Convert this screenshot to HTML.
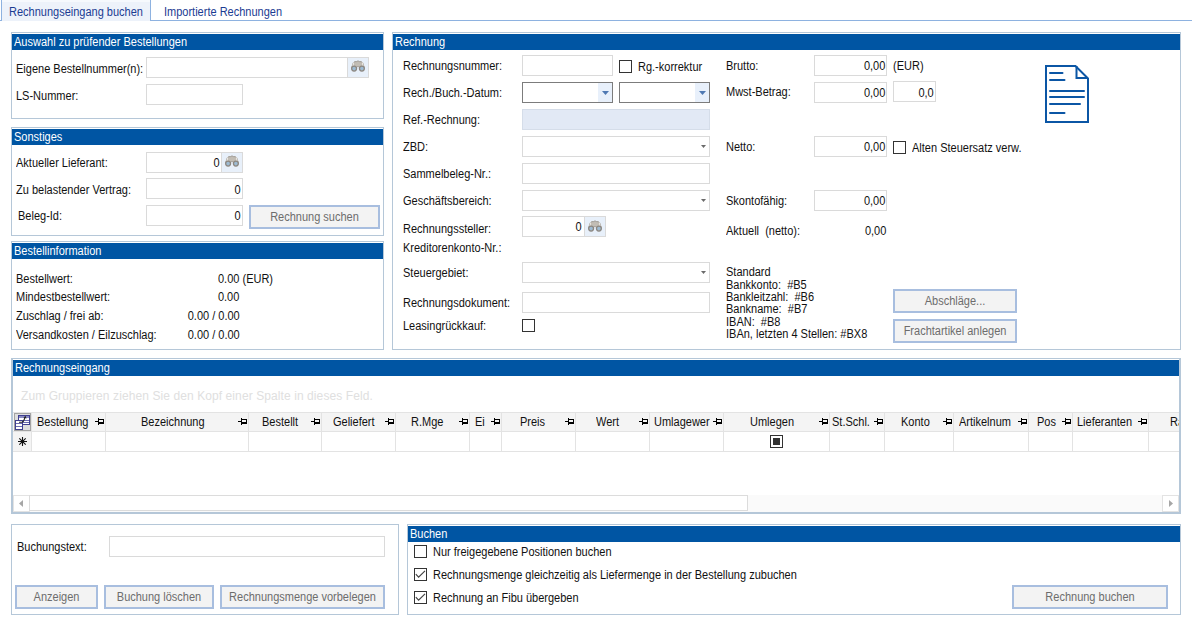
<!DOCTYPE html>
<html><head><meta charset="utf-8"><style>
html,body{margin:0;padding:0;width:1192px;height:623px;overflow:hidden;background:#fff;position:relative}
div,svg{position:absolute;box-sizing:content-box}
.ab{position:absolute}
.t{font-family:"Liberation Sans",sans-serif;font-size:12px;line-height:13px;white-space:nowrap;color:#111;transform:scaleX(0.9167);transform-origin:0 0}
.tr{transform-origin:100% 0}
.tc{transform-origin:50% 0}
.w{color:#fff}
.g{color:#6d6d6d}
.tb{color:#1b3c92}
.wm{color:#e0e0e0;font-size:12px;transform:none;letter-spacing:0.09px}
.gb{border:1px solid #b5c7d8;background:#fff}
.gh{background:#0055a3}
.in{border:1px solid #dadada;background:#fff}
.dd{border:1px solid #7c7c7c;background:#fff}
.btn{border:2px solid #a8bedf;background:#f3f3f3}
.cb{width:11px;height:11px;border:1px solid #333;background:#fff}
.bn{background:#e8f0fa;border-left:1px solid #dadada}
</style></head><body>

<div class="" style="left:0px;top:20px;width:1192px;height:1px;background:#8eb2e0"></div>
<div style="left:1px;top:-2px;width:148px;height:22px;border:1px solid #8eb2e0;border-bottom:none;border-radius:2px 2px 0 0;background:#edf2fa"></div>
<div class="" style="left:2px;top:0px;width:148px;height:2px;background:#f6f9fd"></div>
<div class="t tb" style="left:9px;top:6px;">Rechnungseingang buchen</div>
<div class="t tb" style="left:164px;top:6px;">Importierte Rechnungen</div>
<div class="gb" style="left:11px;top:32px;width:371px;height:85px"></div>
<div class="gh" style="left:12px;top:34px;width:371px;height:16px"></div>
<div class="t w" style="left:14px;top:36px;">Auswahl zu prüfender Bestellungen</div>
<div class="t " style="left:16px;top:63px;">Eigene Bestellnummer(n):</div>
<div class="t " style="left:16px;top:90px;">LS-Nummer:</div>
<div class="in" style="left:146px;top:57px;width:221px;height:19px;"></div>
<div class="bn" style="left:347px;top:58px;width:20px;height:19px"></div>
<svg class="ab" style="left:350px;top:60px" width="16" height="13" viewBox="0 0 16 13">
<path d="M3.2 2.8 Q4.6 1.2 6.4 1.6 L8 0.9 L9.6 1.6 Q11.4 1.2 12.8 2.8 L14.2 7.6 L9.3 7.6 L8 6.2 L6.7 7.6 L1.8 7.6 Z" fill="#c2bdb5" stroke="#9a948c" stroke-width="0.9"/>
<path d="M3.5 2.5 L3 6 M12.5 2.5 L13 6" stroke="#f2f0ec" stroke-width="1"/>
<circle cx="4.1" cy="8.6" r="2.45" fill="#9dbbd3" stroke="#8d8882" stroke-width="1.3"/>
<circle cx="11.9" cy="8.6" r="2.45" fill="#9dbbd3" stroke="#8d8882" stroke-width="1.3"/>
</svg>
<div class="in" style="left:146px;top:84px;width:95px;height:19px;"></div>
<div class="gb" style="left:11px;top:127px;width:371px;height:107px"></div>
<div class="gh" style="left:12px;top:129px;width:371px;height:16px"></div>
<div class="t w" style="left:14px;top:131px;">Sonstiges</div>
<div class="t " style="left:16px;top:157px;">Aktueller Lieferant:</div>
<div class="t " style="left:16px;top:184px;">Zu belastender Vertrag:</div>
<div class="t " style="left:18px;top:210px;">Beleg-Id:</div>
<div class="in" style="left:146px;top:152px;width:95px;height:19px;"></div>
<div class="bn" style="left:221px;top:153px;width:20px;height:19px"></div>
<svg class="ab" style="left:224px;top:155px" width="16" height="13" viewBox="0 0 16 13">
<path d="M3.2 2.8 Q4.6 1.2 6.4 1.6 L8 0.9 L9.6 1.6 Q11.4 1.2 12.8 2.8 L14.2 7.6 L9.3 7.6 L8 6.2 L6.7 7.6 L1.8 7.6 Z" fill="#c2bdb5" stroke="#9a948c" stroke-width="0.9"/>
<path d="M3.5 2.5 L3 6 M12.5 2.5 L13 6" stroke="#f2f0ec" stroke-width="1"/>
<circle cx="4.1" cy="8.6" r="2.45" fill="#9dbbd3" stroke="#8d8882" stroke-width="1.3"/>
<circle cx="11.9" cy="8.6" r="2.45" fill="#9dbbd3" stroke="#8d8882" stroke-width="1.3"/>
</svg>
<div class="t tr " style="right:972px;top:157px;">0</div>
<div class="in" style="left:146px;top:178px;width:95px;height:19px;"></div>
<div class="t tr " style="right:951px;top:184px;">0</div>
<div class="in" style="left:146px;top:205px;width:95px;height:19px;"></div>
<div class="t tr " style="right:951px;top:210px;">0</div>
<div class="btn" style="left:249px;top:205px;width:127px;height:20px"></div>
<div class="t tc g" style="left:249px;width:131px;text-align:center;top:211px;">Rechnung suchen</div>
<div class="gb" style="left:11px;top:241px;width:371px;height:107px"></div>
<div class="gh" style="left:12px;top:243px;width:371px;height:16px"></div>
<div class="t w" style="left:14px;top:245px;">Bestellinformation</div>
<div class="t " style="left:16px;top:273px;">Bestellwert:</div>
<div class="t " style="left:16px;top:291px;">Mindestbestellwert:</div>
<div class="t " style="left:16px;top:310px;">Zuschlag / frei ab:</div>
<div class="t " style="left:16px;top:329px;">Versandkosten / Eilzuschlag:</div>
<div class="t " style="left:218px;top:273px;">0.00 (EUR)</div>
<div class="t tr " style="right:953px;top:291px;">0.00</div>
<div class="t tr " style="right:952px;top:310px;">0.00 / 0.00</div>
<div class="t tr " style="right:952px;top:329px;">0.00 / 0.00</div>
<div class="gb" style="left:392px;top:32px;width:787px;height:316px"></div>
<div class="gh" style="left:393px;top:34px;width:787px;height:16px"></div>
<div class="t w" style="left:395px;top:36px;">Rechnung</div>
<div class="t " style="left:403px;top:60px;">Rechnungsnummer:</div>
<div class="t " style="left:403px;top:87px;">Rech./Buch.-Datum:</div>
<div class="t " style="left:403px;top:114px;">Ref.-Rechnung:</div>
<div class="t " style="left:403px;top:141px;">ZBD:</div>
<div class="t " style="left:403px;top:168px;">Sammelbeleg-Nr.:</div>
<div class="t " style="left:403px;top:195px;">Geschäftsbereich:</div>
<div class="t " style="left:403px;top:223px;">Rechnungssteller:</div>
<div class="t " style="left:403px;top:242px;">Kreditorenkonto-Nr.:</div>
<div class="t " style="left:403px;top:267px;">Steuergebiet:</div>
<div class="t " style="left:403px;top:297px;">Rechnungsdokument:</div>
<div class="t " style="left:403px;top:320px;">Leasingrückkauf:</div>
<div class="in" style="left:522px;top:55px;width:89px;height:19px;"></div>
<div class="cb" style="left:619px;top:60px"></div>
<div class="t " style="left:638px;top:61px;">Rg.-korrektur</div>
<div class="dd" style="left:522px;top:82px;width:89px;height:19px;"></div>
<div style="left:598px;top:83px;width:14px;height:19px;background:#e8f0fb"></div>
<svg class="ab" style="left:602px;top:91px" width="7" height="4" viewBox="0 0 7 4"><path d="M0 0H7L3.5 4Z" fill="#4f79b3"/></svg>
<div class="dd" style="left:619px;top:82px;width:89px;height:19px;"></div>
<div style="left:695px;top:83px;width:14px;height:19px;background:#e8f0fb"></div>
<svg class="ab" style="left:699px;top:91px" width="7" height="4" viewBox="0 0 7 4"><path d="M0 0H7L3.5 4Z" fill="#4f79b3"/></svg>
<div class="in" style="left:522px;top:109px;width:186px;height:19px;background:#e2e9f5;border-color:#d5dde9"></div>
<div class="in" style="left:522px;top:136px;width:186px;height:19px;"></div>
<svg class="ab" style="left:701px;top:145px" width="5" height="3" viewBox="0 0 5 3"><path d="M0 0H5L2.5 3Z" fill="#6a6a6a"/></svg>
<div class="in" style="left:522px;top:163px;width:186px;height:19px;"></div>
<div class="in" style="left:522px;top:190px;width:186px;height:19px;"></div>
<svg class="ab" style="left:701px;top:199px" width="5" height="3" viewBox="0 0 5 3"><path d="M0 0H5L2.5 3Z" fill="#6a6a6a"/></svg>
<div class="in" style="left:522px;top:216px;width:82px;height:19px;"></div>
<div class="bn" style="left:584px;top:217px;width:20px;height:19px"></div>
<svg class="ab" style="left:587px;top:220px" width="16" height="13" viewBox="0 0 16 13">
<path d="M3.2 2.8 Q4.6 1.2 6.4 1.6 L8 0.9 L9.6 1.6 Q11.4 1.2 12.8 2.8 L14.2 7.6 L9.3 7.6 L8 6.2 L6.7 7.6 L1.8 7.6 Z" fill="#c2bdb5" stroke="#9a948c" stroke-width="0.9"/>
<path d="M3.5 2.5 L3 6 M12.5 2.5 L13 6" stroke="#f2f0ec" stroke-width="1"/>
<circle cx="4.1" cy="8.6" r="2.45" fill="#9dbbd3" stroke="#8d8882" stroke-width="1.3"/>
<circle cx="11.9" cy="8.6" r="2.45" fill="#9dbbd3" stroke="#8d8882" stroke-width="1.3"/>
</svg>
<div class="t tr " style="right:610px;top:221px;">0</div>
<div class="in" style="left:522px;top:262px;width:186px;height:19px;"></div>
<svg class="ab" style="left:701px;top:271px" width="5" height="3" viewBox="0 0 5 3"><path d="M0 0H5L2.5 3Z" fill="#6a6a6a"/></svg>
<div class="in" style="left:522px;top:292px;width:186px;height:19px;"></div>
<div class="cb" style="left:522px;top:319px"></div>
<div class="t " style="left:726px;top:60px;">Brutto:</div>
<div class="t " style="left:726px;top:86px;">Mwst-Betrag:</div>
<div class="t " style="left:726px;top:141px;">Netto:</div>
<div class="t " style="left:726px;top:195px;">Skontofähig:</div>
<div class="t " style="left:726px;top:225px;">Aktuell&nbsp; (netto):</div>
<div class="in" style="left:814px;top:55px;width:71px;height:19px;"></div>
<div class="t tr " style="right:307px;top:60px;">0,00</div>
<div class="t " style="left:893px;top:60px;">(EUR)</div>
<div class="in" style="left:814px;top:82px;width:71px;height:19px;"></div>
<div class="t tr " style="right:307px;top:87px;">0,00</div>
<div class="in" style="left:893px;top:81px;width:41px;height:19px;"></div>
<div class="t tr " style="right:258px;top:87px;">0,0</div>
<div class="in" style="left:814px;top:136px;width:71px;height:19px;"></div>
<div class="t tr " style="right:307px;top:141px;">0,00</div>
<div class="cb" style="left:893px;top:141px"></div>
<div class="t " style="left:912px;top:142px;">Alten Steuersatz verw.</div>
<div class="in" style="left:814px;top:190px;width:71px;height:19px;"></div>
<div class="t tr " style="right:307px;top:195px;">0,00</div>
<div class="t tr " style="right:306px;top:225px;">0,00</div>
<svg class="ab" style="left:1040px;top:60px" width="55" height="68" viewBox="0 0 55 68">
<path d="M6 6 H35.5 L48 18.5 V62 H6 Z" fill="#fff" stroke="#0b56a5" stroke-width="2"/>
<path d="M36.5 6 V18 H48" fill="none" stroke="#0b56a5" stroke-width="2"/>
<g stroke="#0b56a5" stroke-width="2" stroke-linecap="round">
<path d="M10 13 H22.5"/><path d="M10 20 H24.5"/><path d="M10 31 H44"/><path d="M10 37 H44"/><path d="M10 44 H40"/><path d="M10 53 H24.5"/>
</g></svg>
<div class="t " style="left:726px;top:266px;">Standard</div>
<div class="t " style="left:726px;top:279px;">Bankkonto:&nbsp; #B5</div>
<div class="t " style="left:726px;top:291px;">Bankleitzahl:&nbsp; #B6</div>
<div class="t " style="left:726px;top:303px;">Bankname:&nbsp; #B7</div>
<div class="t " style="left:726px;top:316px;">IBAN:&nbsp; #B8</div>
<div class="t " style="left:726px;top:328px;">IBAn, letzten 4 Stellen: #BX8</div>
<div class="btn" style="left:893px;top:289px;width:120px;height:20px"></div>
<div class="t tc g" style="left:893px;width:124px;text-align:center;top:295px;">Abschläge...</div>
<div class="btn" style="left:893px;top:319px;width:120px;height:20px"></div>
<div class="t tc g" style="left:893px;width:124px;text-align:center;top:325px;">Frachtartikel anlegen</div>
<div style="left:11px;top:358px;width:1166px;height:153px;border:1px solid #b5c7d8;border-left:2px solid #b5c7d8;border-right:2px solid #b5c7d8;border-bottom:2px solid #b5c7d8;background:#fff"></div>
<div class="gh" style="left:13px;top:360px;width:1166px;height:16px"></div>
<div class="t w" style="left:15px;top:362px;">Rechnungseingang</div>
<div class="t wm" style="left:21px;top:390px;">Zum Gruppieren ziehen Sie den Kopf einer Spalte in dieses Feld.</div>
<div class="" style="left:13px;top:412px;width:1166px;height:1px;background:#e3e3e3"></div>
<div class="" style="left:13px;top:413px;width:1166px;height:18px;background:#f4f4f4"></div>
<div class="" style="left:13px;top:431px;width:1166px;height:1px;background:#e3e3e3"></div>
<div class="" style="left:13px;top:451px;width:1166px;height:1px;background:#e3e3e3"></div>
<div class="" style="left:13px;top:432px;width:18px;height:19px;background:#f4f4f4"></div>
<div class="" style="left:31px;top:413px;width:1px;height:38px;background:#e3e3e3"></div>
<div class="" style="left:105px;top:413px;width:1px;height:38px;background:#e3e3e3"></div>
<div class="" style="left:248px;top:413px;width:1px;height:38px;background:#e3e3e3"></div>
<div class="" style="left:321px;top:413px;width:1px;height:38px;background:#e3e3e3"></div>
<div class="" style="left:395px;top:413px;width:1px;height:38px;background:#e3e3e3"></div>
<div class="" style="left:469px;top:413px;width:1px;height:38px;background:#e3e3e3"></div>
<div class="" style="left:501px;top:413px;width:1px;height:38px;background:#e3e3e3"></div>
<div class="" style="left:575px;top:413px;width:1px;height:38px;background:#e3e3e3"></div>
<div class="" style="left:649px;top:413px;width:1px;height:38px;background:#e3e3e3"></div>
<div class="" style="left:723px;top:413px;width:1px;height:38px;background:#e3e3e3"></div>
<div class="" style="left:829px;top:413px;width:1px;height:38px;background:#e3e3e3"></div>
<div class="" style="left:884px;top:413px;width:1px;height:38px;background:#e3e3e3"></div>
<div class="" style="left:953px;top:413px;width:1px;height:38px;background:#e3e3e3"></div>
<div class="" style="left:1028px;top:413px;width:1px;height:38px;background:#e3e3e3"></div>
<div class="" style="left:1072px;top:413px;width:1px;height:38px;background:#e3e3e3"></div>
<div class="" style="left:1148px;top:413px;width:1px;height:38px;background:#e3e3e3"></div>
<div class="t " style="left:37px;top:416px;">Bestellung</div>
<div class="t " style="left:141px;top:416px;">Bezeichnung</div>
<div class="t " style="left:262px;top:416px;">Bestellt</div>
<div class="t " style="left:333px;top:416px;">Geliefert</div>
<div class="t " style="left:411px;top:416px;">R.Mge</div>
<div class="t " style="left:475px;top:416px;">Ei</div>
<div class="t " style="left:520px;top:416px;">Preis</div>
<div class="t " style="left:596px;top:416px;">Wert</div>
<div class="t " style="left:654px;top:416px;">Umlagewer</div>
<div class="t " style="left:750px;top:416px;">Umlegen</div>
<div class="t " style="left:832px;top:416px;">St.Schl.</div>
<div class="t " style="left:901px;top:416px;">Konto</div>
<div class="t " style="left:959px;top:416px;">Artikelnum</div>
<div class="t " style="left:1037px;top:416px;">Pos</div>
<div class="t " style="left:1077px;top:416px;">Lieferanten</div>
<div style="left:1149px;top:413px;width:30px;height:18px;overflow:hidden"><div class="t" style="left:21px;top:3px">Ra</div></div>
<svg class="ab" style="left:95px;top:418px" width="9" height="7" viewBox="0 0 9 7" shape-rendering="crispEdges"><path d="M0 3H3M3.5 0V7M4 1.5H8.5V4.5H4" fill="none" stroke="#000" stroke-width="1"/><rect x="4" y="4" width="5" height="2" fill="#000"/></svg>
<svg class="ab" style="left:238px;top:418px" width="9" height="7" viewBox="0 0 9 7" shape-rendering="crispEdges"><path d="M0 3H3M3.5 0V7M4 1.5H8.5V4.5H4" fill="none" stroke="#000" stroke-width="1"/><rect x="4" y="4" width="5" height="2" fill="#000"/></svg>
<svg class="ab" style="left:311px;top:418px" width="9" height="7" viewBox="0 0 9 7" shape-rendering="crispEdges"><path d="M0 3H3M3.5 0V7M4 1.5H8.5V4.5H4" fill="none" stroke="#000" stroke-width="1"/><rect x="4" y="4" width="5" height="2" fill="#000"/></svg>
<svg class="ab" style="left:385px;top:418px" width="9" height="7" viewBox="0 0 9 7" shape-rendering="crispEdges"><path d="M0 3H3M3.5 0V7M4 1.5H8.5V4.5H4" fill="none" stroke="#000" stroke-width="1"/><rect x="4" y="4" width="5" height="2" fill="#000"/></svg>
<svg class="ab" style="left:459px;top:418px" width="9" height="7" viewBox="0 0 9 7" shape-rendering="crispEdges"><path d="M0 3H3M3.5 0V7M4 1.5H8.5V4.5H4" fill="none" stroke="#000" stroke-width="1"/><rect x="4" y="4" width="5" height="2" fill="#000"/></svg>
<svg class="ab" style="left:491px;top:418px" width="9" height="7" viewBox="0 0 9 7" shape-rendering="crispEdges"><path d="M0 3H3M3.5 0V7M4 1.5H8.5V4.5H4" fill="none" stroke="#000" stroke-width="1"/><rect x="4" y="4" width="5" height="2" fill="#000"/></svg>
<svg class="ab" style="left:565px;top:418px" width="9" height="7" viewBox="0 0 9 7" shape-rendering="crispEdges"><path d="M0 3H3M3.5 0V7M4 1.5H8.5V4.5H4" fill="none" stroke="#000" stroke-width="1"/><rect x="4" y="4" width="5" height="2" fill="#000"/></svg>
<svg class="ab" style="left:639px;top:418px" width="9" height="7" viewBox="0 0 9 7" shape-rendering="crispEdges"><path d="M0 3H3M3.5 0V7M4 1.5H8.5V4.5H4" fill="none" stroke="#000" stroke-width="1"/><rect x="4" y="4" width="5" height="2" fill="#000"/></svg>
<svg class="ab" style="left:713px;top:418px" width="9" height="7" viewBox="0 0 9 7" shape-rendering="crispEdges"><path d="M0 3H3M3.5 0V7M4 1.5H8.5V4.5H4" fill="none" stroke="#000" stroke-width="1"/><rect x="4" y="4" width="5" height="2" fill="#000"/></svg>
<svg class="ab" style="left:819px;top:418px" width="9" height="7" viewBox="0 0 9 7" shape-rendering="crispEdges"><path d="M0 3H3M3.5 0V7M4 1.5H8.5V4.5H4" fill="none" stroke="#000" stroke-width="1"/><rect x="4" y="4" width="5" height="2" fill="#000"/></svg>
<svg class="ab" style="left:874px;top:418px" width="9" height="7" viewBox="0 0 9 7" shape-rendering="crispEdges"><path d="M0 3H3M3.5 0V7M4 1.5H8.5V4.5H4" fill="none" stroke="#000" stroke-width="1"/><rect x="4" y="4" width="5" height="2" fill="#000"/></svg>
<svg class="ab" style="left:943px;top:418px" width="9" height="7" viewBox="0 0 9 7" shape-rendering="crispEdges"><path d="M0 3H3M3.5 0V7M4 1.5H8.5V4.5H4" fill="none" stroke="#000" stroke-width="1"/><rect x="4" y="4" width="5" height="2" fill="#000"/></svg>
<svg class="ab" style="left:1018px;top:418px" width="9" height="7" viewBox="0 0 9 7" shape-rendering="crispEdges"><path d="M0 3H3M3.5 0V7M4 1.5H8.5V4.5H4" fill="none" stroke="#000" stroke-width="1"/><rect x="4" y="4" width="5" height="2" fill="#000"/></svg>
<svg class="ab" style="left:1062px;top:418px" width="9" height="7" viewBox="0 0 9 7" shape-rendering="crispEdges"><path d="M0 3H3M3.5 0V7M4 1.5H8.5V4.5H4" fill="none" stroke="#000" stroke-width="1"/><rect x="4" y="4" width="5" height="2" fill="#000"/></svg>
<svg class="ab" style="left:1138px;top:418px" width="9" height="7" viewBox="0 0 9 7" shape-rendering="crispEdges"><path d="M0 3H3M3.5 0V7M4 1.5H8.5V4.5H4" fill="none" stroke="#000" stroke-width="1"/><rect x="4" y="4" width="5" height="2" fill="#000"/></svg>
<svg class="ab" style="left:14px;top:413px" width="17" height="18" viewBox="0 0 17 18" shape-rendering="crispEdges">
<rect x="0.5" y="0.5" width="16" height="17" fill="#dedede" stroke="#a3a3a3"/>
<rect x="4.5" y="2.5" width="11" height="9" fill="#fff" stroke="#3f3f8f"/>
<rect x="5" y="3" width="10" height="2" fill="#8a8ac4"/>
<path d="M5 7.5H15M5 9.5H15" stroke="#6b6bb0"/>
<rect x="1.5" y="7.5" width="7" height="9" fill="#fff" stroke="#3f3f8f"/>
<path d="M2 10.5H8M2 13.5H8" stroke="#6b6bb0"/>
</svg>
<svg class="ab" style="left:14px;top:413px" width="17" height="18" viewBox="0 0 17 18">
<path d="M5 9.2 H8 Q9.5 9.2 10 7 L11 4.5" fill="none" stroke="#222" stroke-width="1.1"/>
<path d="M9.3 4.6 L11.6 3 L12.6 5.6 Z" fill="#222"/>
</svg>
<svg class="ab" style="left:17px;top:436px" width="11" height="11" viewBox="0 0 11 11"><path d="M5.5 1V10M1 5.5H10M2.3 2.3L8.7 8.7M2.3 8.7L8.7 2.3" stroke="#111" stroke-width="1.1"/><circle cx="5.5" cy="5.5" r="1.6" fill="#111"/></svg>
<div class="cb" style="left:770px;top:435px"></div>
<div class="" style="left:773px;top:438px;width:7px;height:7px;background:#333"></div>
<div class="" style="left:13px;top:495px;width:1166px;height:17px;background:#fafafa"></div>
<div style="left:13px;top:495px;width:15px;height:15px;border:1px solid #e3e3e3;background:#fff"></div>
<svg class="ab" style="left:19px;top:500px" width="4" height="7" viewBox="0 0 4 7"><path d="M4 0V7L0 3.5Z" fill="#a6a6a6"/></svg>
<div style="left:29px;top:495px;width:717px;height:14px;border:1px solid #dcdcdc;background:#fff"></div>
<div style="left:1162px;top:495px;width:15px;height:15px;border:1px solid #e3e3e3;background:#fff"></div>
<svg class="ab" style="left:1169px;top:500px" width="4" height="7" viewBox="0 0 4 7"><path d="M0 0V7L4 3.5Z" fill="#a6a6a6"/></svg>
<div class="gb" style="left:11px;top:524px;width:386px;height:89px"></div>
<div class="t " style="left:17px;top:541px;">Buchungstext:</div>
<div class="in" style="left:109px;top:536px;width:274px;height:19px;"></div>
<div class="btn" style="left:15px;top:585px;width:79px;height:20px"></div>
<div class="t tc g" style="left:15px;width:83px;text-align:center;top:591px;">Anzeigen</div>
<div class="btn" style="left:104px;top:585px;width:106px;height:20px"></div>
<div class="t tc g" style="left:104px;width:110px;text-align:center;top:591px;">Buchung löschen</div>
<div class="btn" style="left:220px;top:585px;width:161px;height:20px"></div>
<div class="t tc g" style="left:220px;width:165px;text-align:center;top:591px;">Rechnungsmenge vorbelegen</div>
<div class="gb" style="left:407px;top:524px;width:772px;height:89px"></div>
<div class="gh" style="left:408px;top:526px;width:772px;height:16px"></div>
<div class="t w" style="left:410px;top:528px;">Buchen</div>
<div class="cb" style="left:414px;top:545px"></div>
<div class="t " style="left:433px;top:546px;">Nur freigegebene Positionen buchen</div>
<div class="cb" style="left:414px;top:568px"></div>
<svg class="ab" style="left:414px;top:568px" width="13" height="13" viewBox="0 0 13 13"><path d="M1.8 6.2 L4.6 9.2 L11 2.8" fill="none" stroke="#444" stroke-width="1.2"/></svg>
<div class="t " style="left:433px;top:569px;">Rechnungsmenge gleichzeitig als Liefermenge in der Bestellung zubuchen</div>
<div class="cb" style="left:414px;top:591px"></div>
<svg class="ab" style="left:414px;top:591px" width="13" height="13" viewBox="0 0 13 13"><path d="M1.8 6.2 L4.6 9.2 L11 2.8" fill="none" stroke="#444" stroke-width="1.2"/></svg>
<div class="t " style="left:433px;top:592px;">Rechnung an Fibu übergeben</div>
<div class="btn" style="left:1012px;top:585px;width:152px;height:20px"></div>
<div class="t tc g" style="left:1012px;width:156px;text-align:center;top:591px;">Rechnung buchen</div>
</body></html>
